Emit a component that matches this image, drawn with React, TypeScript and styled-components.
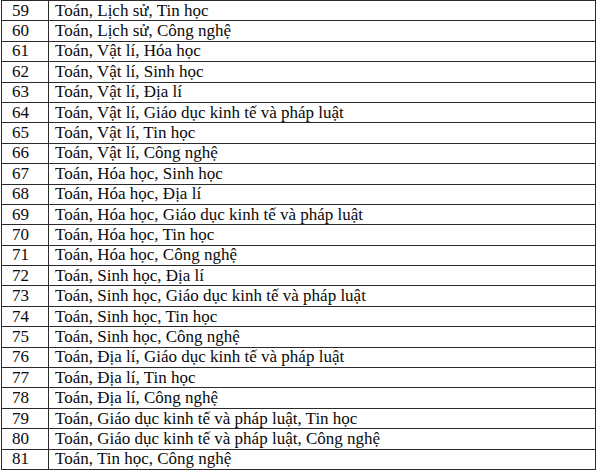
import React from 'react';
import styled, {createGlobalStyle} from 'styled-components';

const GlobalStyle = createGlobalStyle`
  html, body {
    margin: 0;
    padding: 0;
    background: #ffffff;
  }
`;

const Page = styled.div`
  padding: 0 4px 0 1px;
  width: 600px;
  box-sizing: border-box;
`;

const Table = styled.table`
  border-collapse: collapse;
  width: 595px;
  font-family: "Liberation Serif", "Times New Roman", serif;
  font-size: 17px;
  color: #0a0a0a;
`;

const Row = styled.tr`
  height: 20.4px;
`;

const Cell = styled.td<{ $num?: boolean }>`
  border: 1px solid #2b2b2b;
  padding: 0 0 0 ${props => (props.$num ? '10px' : '6px')};
  width: ${props => (props.$num ? '36px' : 'auto')};
  line-height: 18px;
  white-space: nowrap;
  vertical-align: middle;
`;

const rows: [number, string][] = [
    [59, 'Toán, Lịch sử, Tin học'],
    [60, 'Toán, Lịch sử, Công nghệ'],
    [61, 'Toán, Vật lí, Hóa học'],
    [62, 'Toán, Vật lí, Sinh học'],
    [63, 'Toán, Vật lí, Địa lí'],
    [64, 'Toán, Vật lí, Giáo dục kinh tế và pháp luật'],
    [65, 'Toán, Vật lí, Tin học'],
    [66, 'Toán, Vật lí, Công nghệ'],
    [67, 'Toán, Hóa học, Sinh học'],
    [68, 'Toán, Hóa học, Địa lí'],
    [69, 'Toán, Hóa học, Giáo dục kinh tế và pháp luật'],
    [70, 'Toán, Hóa học, Tin học'],
    [71, 'Toán, Hóa học, Công nghệ'],
    [72, 'Toán, Sinh học, Địa lí'],
    [73, 'Toán, Sinh học, Giáo dục kinh tế và pháp luật'],
    [74, 'Toán, Sinh học, Tin học'],
    [75, 'Toán, Sinh học, Công nghệ'],
    [76, 'Toán, Địa lí, Giáo dục kinh tế và pháp luật'],
    [77, 'Toán, Địa lí, Tin học'],
    [78, 'Toán, Địa lí, Công nghệ'],
    [79, 'Toán, Giáo dục kinh tế và pháp luật, Tin học'],
    [80, 'Toán, Giáo dục kinh tế và pháp luật, Công nghệ'],
    [81, 'Toán, Tin học, Công nghệ'],
];

export default function App() {
    return (
        <Page>
            <GlobalStyle />
            <Table>
                <tbody>
                    {rows.map(([n, subjects]) => (
                        <Row key={n}>
                            <Cell $num>{n}</Cell>
                            <Cell>{subjects}</Cell>
                        </Row>
                    ))}
                </tbody>
            </Table>
        </Page>
    );
}
